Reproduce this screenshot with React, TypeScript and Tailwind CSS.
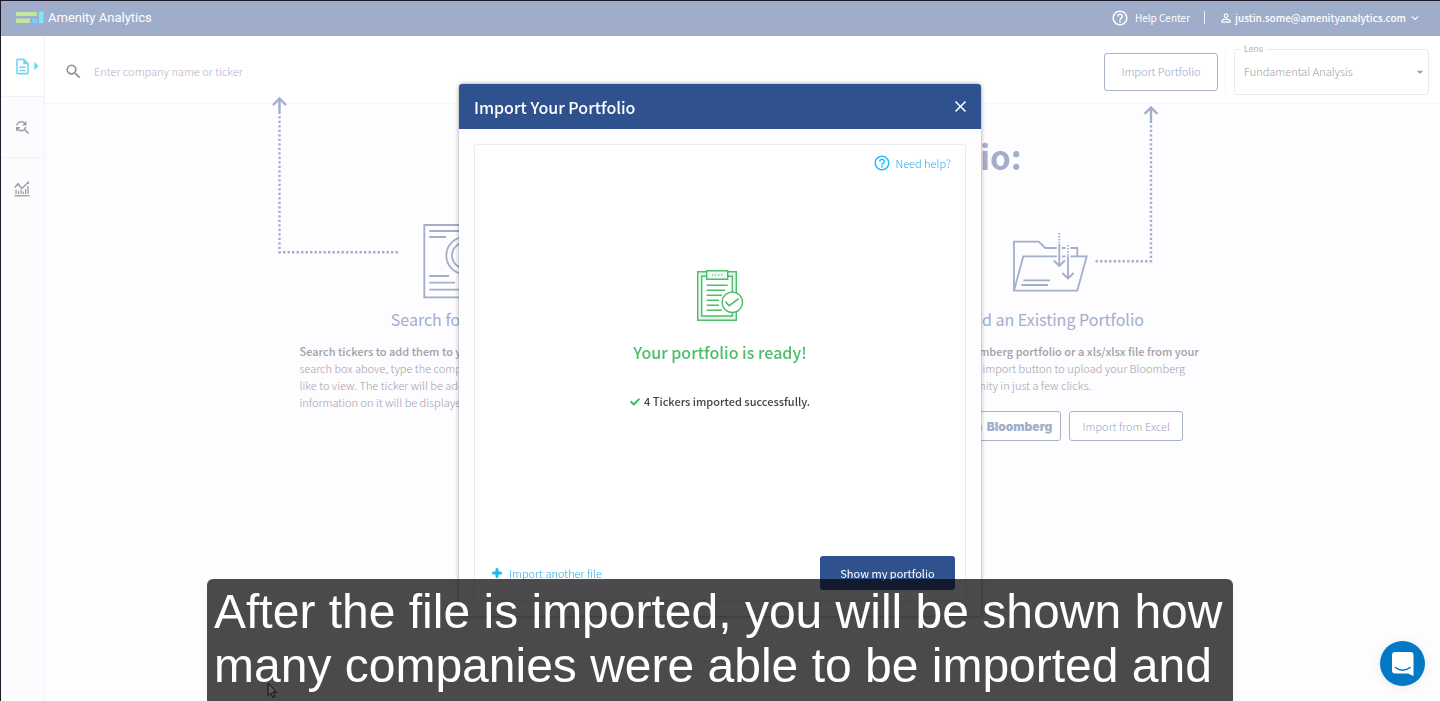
import type { ReactNode } from "react";
import {
  MdArrowDropDown,
  MdArrowRight,
  MdClose,
  MdExpandMore,
  MdFindReplace,
  MdHelpOutline,
  MdOutlineDescription,
  MdPersonOutline,
  MdSearch,
} from "react-icons/md";
import { FaCheck } from "react-icons/fa";

function Logo() {
  return (
    <svg width="28" height="13" viewBox="0 0 28 13" aria-hidden="true">
      <path fill="#bfe89b" d="M0 1h21v4H0zM0 7.500h14V12H0z" />
      <path fill="#6fd0fb" d="M16 7.500h5V12h-5z" />
      <path fill="#7ae8fb" d="M23 .5h4.500V12H23z" />
    </svg>
  );
}

function ChartIcon() {
  return (
    <svg width="16" height="16" viewBox="0 0 16 16" fill="none" stroke="#a09ea2" aria-hidden="true">
      <path strokeWidth="1.400" d="M.5 14.800h15" />
      <path strokeWidth="1.300" d="M2 8.500V13M4.500 10V13M7 8.500V13M9.300 10.500V13M11.600 8V13M14 5v8" />
      <path strokeWidth="1.500" d="M.7 6.500 4 3.200l4 4.300L14 1.500" />
      <circle cx="14" cy="1.800" r="1.200" fill="#a09ea2" stroke="none" />
      <circle cx="4" cy="3.200" r="1.200" fill="#a09ea2" stroke="none" />
    </svg>
  );
}

function CertificateIcon() {
  return (
    <svg width="76" height="76" viewBox="0 0 76 76" fill="none" stroke="#a3aecb" strokeWidth="1.800" aria-hidden="true">
      <path d="M2.300 2h71.400v72.300H2.300zM7.300 8h61M7.300 14H24M7.300 53H27M7.300 59.700H33M7.300 66.700h61" />
      <circle cx="43" cy="32.500" r="18.700" />
      <circle cx="43" cy="32.500" r="13" />
    </svg>
  );
}

function FolderIcon() {
  return (
    <svg width="76" height="76" viewBox="0 0 76 76" fill="none" stroke="#a3aecb" strokeWidth="1.800" aria-hidden="true">
      <path d="M2 67.700v-49h24.700l6.600 6.300h32v8.300" />
      <path d="M2 67.700 11.300 33.300h63.400l-9.400 34.400zM11.300 57.300H38M9.300 62H36" />
      <path stroke="#fdfcfe" strokeWidth="5" d="M47.300 19v17M56 24v20" />
      <path strokeDasharray="1.600 1.400" d="M47.300 10v10M56 22v11" />
      <path d="M47.300 20.700v22.600M41.800 37.500l5.500 5.500 5.500-5.500M56 33.300v22.400M50.300 50l5.700 5.500 5.700-5.500" />
    </svg>
  );
}

function ClipboardIcon() {
  return (
    <svg width="48" height="53" viewBox="0 0 48 53" fill="none" stroke="#4dbd6b" strokeWidth="1.400" aria-hidden="true">
      <path fill="#e4f6e9" d="M1.700 2.700h38.600v48.600H1.700z" />
      <path fill="#fff" d="M5.700 7.300h30.600V47H5.700z" />
      <path fill="#effaf2" d="M10.700 1.700h21v8.600h-21z" />
      <path strokeWidth="1.700" strokeDasharray="1 2" d="M16.200 6h11" />
      <path d="M10.700 16.300h21M10.700 21.300H29M10.700 26.300H26M10.700 31.300H23M10.700 36.300H23M10.700 41.300H26" />
      <circle cx="36.300" cy="33.300" r="10.200" fill="#fff" />
      <path strokeWidth="1.600" d="m29.300 32.500 3.900 4.200 9.600-7" />
    </svg>
  );
}

function PlusIcon() {
  return (
    <svg width="10" height="10" viewBox="0 0 10 10" stroke="#1fb8f0" strokeWidth="3" strokeLinecap="round" aria-hidden="true">
      <path d="M5 1.500v7M1.500 5h7" />
    </svg>
  );
}

function ChatIcon() {
  return (
    <svg width="22" height="24" viewBox="0 0 22 24" aria-hidden="true">
      <path fill="#fff" d="M3 0h15.500a3 3 0 0 1 3 3v21l-5.500-2.500H3a3 3 0 0 1-3-3V3a3 3 0 0 1 3-3z" />
      <path d="M3.500 15.500c4 3.500 10.500 3.500 14.500 0" fill="none" stroke="#0479c3" strokeWidth="1.500" strokeLinecap="round" />
    </svg>
  );
}

function SideItem({ label, active, children }: { label: string; active?: boolean; children: ReactNode }) {
  return (
    <a
      href="#"
      aria-label={label}
      className={`flex h-[61px] items-center border-b border-[#f3f1f5] pl-3 last:border-b-0 ${active ? "bg-white text-[#6fd6fa]" : "text-[#a09ea2]"}`}
    >
      {children}
    </a>
  );
}

const outlineButton =
  "rounded-[3px] border border-[#a9b2cc] bg-white font-light text-[#9c9fc4] whitespace-nowrap";

export default function App() {
  return (
    <div className="flex min-h-screen flex-col border-t border-l border-[#1d1b2b] bg-[#fdfcfe] font-['Noto_Sans_CJK_SC',sans-serif] text-[11px] leading-[17px] text-[#a3a1a6]">
      <header className="flex h-[35px] items-center bg-[#9fadca] pr-[18px] pb-[2px] pl-[15px] text-white">
        <Logo />
        <span className="ml-1 font-['Roboto',sans-serif] text-[13px]">Amenity Analytics</span>
        <nav className="ml-auto flex items-center text-[10px]">
          <a href="#" className="flex items-center gap-[6px]">
            <MdHelpOutline size={18} />
            Help Center
          </a>
          <span className="mx-[14px] h-[13px] w-px bg-white/80" />
          <button type="button" className="flex items-center gap-[2px] font-medium">
            <MdPersonOutline size={14} />
            justin.some@amenityanalytics.com
            <MdExpandMore size={14} />
          </button>
        </nav>
      </header>

      <div className="flex grow">
        <aside className="w-[44px] shrink-0 border-r border-[#f3f1f5] bg-[#fcfbfd]">
          <SideItem label="Documents" active>
            <MdOutlineDescription size={19} className="shrink-0" />
            <MdArrowRight size={20} className="-ml-[6px] shrink-0" />
          </SideItem>
          <SideItem label="Find">
            <MdFindReplace size={18} />
          </SideItem>
          <SideItem label="Trends">
            <span className="pl-px">
              <ChartIcon />
            </span>
          </SideItem>
        </aside>

        <div className="flex min-w-0 grow flex-col">
          <div className="flex h-[68px] items-center border-b border-[#f8f6fa] bg-white pt-1 pr-[11px] pl-[19px]">
            <label htmlFor="ticker" aria-label="Search companies">
              <MdSearch size={19} className="text-[#8f8d92]" />
            </label>
            <input
              id="ticker"
              type="text"
              placeholder="Enter company name or ticker"
              className="ml-[11px] grow bg-transparent font-light outline-none placeholder:text-[#b9adc3]"
            />
            <button type="button" className={`h-[38px] w-[114px] ${outlineButton}`}>
              Import Portfolio
            </button>
            <span className="mr-2 ml-[7px] h-[42px] w-px bg-[#f5f3f7]" />
            <div className="relative h-[46px] w-[195px]">
              <label
                htmlFor="lens"
                className="absolute -top-2 left-[7px] bg-white px-[3px] font-['Roboto',sans-serif] text-[9px] leading-4 text-[#b8b5bd]"
              >
                Lens
              </label>
              <select
                id="lens"
                className="h-full w-full appearance-none rounded-[3px] border border-[#ebe9ed] bg-transparent px-[9px] font-light text-[#a09ea3]"
              >
                <option>Fundamental Analysis</option>
              </select>
              <MdArrowDropDown size={16} className="pointer-events-none absolute top-[15px] right-[1px]" />
            </div>
          </div>

          <main className="pt-8">
            <h1 className="text-center text-[33px] leading-10 font-bold text-[#a3aecb]">
              Two Ways to Create Your Portfolio:
            </h1>
            <div className="mt-[47px] flex justify-center gap-[270px] pl-6">
              <section className="relative w-[320px]">
                <svg
                  width="128"
                  height="158"
                  viewBox="0 0 128 158"
                  fill="none"
                  stroke="#a3aecb"
                  strokeWidth="2.400"
                  className="absolute -top-[126px] -left-7"
                  aria-hidden="true"
                >
                  <path d="m1 8 6.500-6.500L14 8M7.500 1.500V17" />
                  <path strokeDasharray="2.400 2.100" d="M7.500 19.200v136h119" />
                </svg>
                <div className="flex justify-center">
                  <CertificateIcon />
                </div>
                <h2 className="mt-2 text-center text-[16px] leading-6 text-[#a3aecb]">Search for a Ticker</h2>
                <p className="mt-3 font-light whitespace-nowrap">
                  <strong className="font-medium">Search tickers to add them to your portfolio. In the</strong>
                  <br />
                  search box above, type the company name you would
                  <br />
                  like to view. The ticker will be added, and all of the
                  <br />
                  information on it will be displayed.
                </p>
              </section>

              <section className="relative w-[320px]">
                <svg
                  width="64"
                  height="158"
                  viewBox="0 0 64 158"
                  fill="none"
                  stroke="#a3aecb"
                  strokeWidth="2.400"
                  className="absolute -top-[117px] right-[51px]"
                  aria-hidden="true"
                >
                  <path d="m49.500 8 6.500-6.500L62.500 8M56 1.500V17" />
                  <path strokeDasharray="2.400 2.100" d="M56 19.200v136H0" />
                </svg>
                <div className="flex justify-center">
                  <FolderIcon />
                </div>
                <h2 className="mt-2 text-center text-[16px] leading-6 text-[#a3aecb]">Load an Existing Portfolio</h2>
                <p className="mt-3 font-light whitespace-nowrap">
                  <strong className="font-medium">Import your Bloomberg portfolio or a xls/xlsx file from your</strong>
                  <br />
                  computer. Use the import button to upload your Bloomberg
                  <br />
                  portfolio into Amenity in just a few clicks.
                </p>
                <div className="mt-[17px] flex justify-center gap-2 pr-[2px]">
                  <button type="button" className={`flex h-[30px] items-center justify-end gap-1 px-2 ${outlineButton}`}>
                    Import from
                    <b className="font-['Inter',sans-serif] text-[12px] font-black text-[#a3aecb]">Bloomberg</b>
                  </button>
                  <button type="button" className={`h-[30px] w-[114px] ${outlineButton}`}>
                    Import from Excel
                  </button>
                </div>
              </section>
            </div>
          </main>
        </div>
      </div>

      <div className="fixed inset-0 z-10 flex items-start justify-center pt-[84px]">
        <div
          role="dialog"
          aria-label="Import Your Portfolio"
          className="w-[522px] rounded-[3px] bg-[#fdfcfe] shadow-[0_0_4px_rgba(0,0,0,0.4)]"
        >
          <div className="flex h-[45px] items-center justify-between rounded-t-[3px] bg-[#2f528f] pr-[11px] pl-[15px] text-white">
            <h2 className="text-[16px] leading-6 font-medium">Import Your Portfolio</h2>
            <button type="button" aria-label="Close">
              <MdClose size={19} />
            </button>
          </div>
          <div className="p-[15px]">
            <div className="flex h-[457px] flex-col rounded-[3px] border border-[#ebe9ed] bg-white px-[10px] pt-[9px] pb-[10px]">
              <a href="#" className="mr-1 flex items-center gap-1 self-end font-light text-[#2fa9ea]">
                <MdHelpOutline size={18} className="text-[#1fc0f5]" />
                Need help?
              </a>
              <div className="mt-[97px] flex flex-col items-center">
                <ClipboardIcon />
                <p className="mt-[18px] text-[16px] leading-6 font-medium text-[#4dbd6b]">Your portfolio is ready!</p>
                <p className="mt-[29px] flex items-center gap-1 font-medium text-[#454247]">
                  <FaCheck size={10} className="text-[#3cb95d]" />
                  4 Tickers imported successfully.
                </p>
              </div>
              <div className="mt-auto flex items-center justify-between">
                <button type="button" className="ml-[7px] flex items-center gap-[7px] font-light text-[#2fa9ea]">
                  <PlusIcon />
                  Import another file
                </button>
                <button type="button" className="h-[34px] w-[135px] rounded-[3px] bg-[#2f528f] text-white">
                  Show my portfolio
                </button>
              </div>
            </div>
          </div>
        </div>
      </div>

      <div className="fixed inset-x-0 bottom-0 z-20 flex justify-center">
        <p className="w-[1026px] rounded-t-[6px] bg-[rgba(8,7,9,0.73)] px-[7px] pt-[6px] pb-2 font-['Liberation_Sans',sans-serif] text-[48px] leading-[54px] text-white">
          After the file is imported, you will be shown how many companies were able to be imported and
        </p>
      </div>

      <svg
        width="11"
        height="17"
        viewBox="0 0 11 17"
        className="fixed bottom-[2px] left-[267px] z-30"
        fill="#5a585b"
        stroke="#111"
        aria-hidden="true"
      >
        <path d="M1 1v12.500l2.800-2.600 2 4.700 2-.9-2-4.500h3.700z" />
      </svg>

      <button
        type="button"
        aria-label="Open chat"
        className="fixed right-[15px] bottom-[15px] z-30 flex size-[45px] items-center justify-center rounded-full bg-[#0479c3] shadow-[0_1px_8px_rgba(0,0,0,0.1)]"
      >
        <ChatIcon />
      </button>
    </div>
  );
}
